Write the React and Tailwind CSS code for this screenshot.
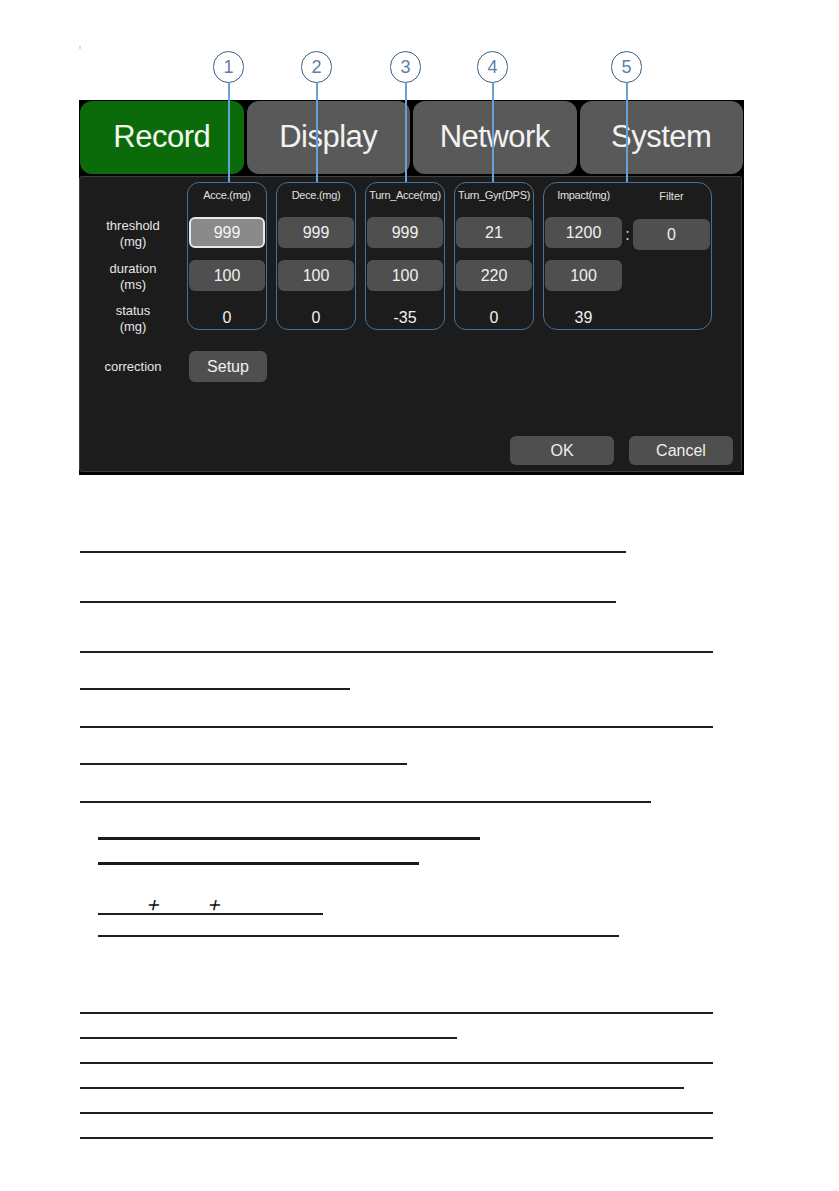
import React from "react";

const callouts = [
  { n: "1", x: "left-[213px]", lx: "left-[228px]" },
  { n: "2", x: "left-[301px]", lx: "left-[316px]" },
  { n: "3", x: "left-[390px]", lx: "left-[405px]" },
  { n: "4", x: "left-[477px]", lx: "left-[492px]" },
  { n: "5", x: "left-[611px]", lx: "left-[626px]" },
];

function Field({ value, selected }) {
  return (
    <div
      className={
        selected
          ? "h-[31px] rounded-[6px] bg-[#8a8a8a] border-2 border-[#e8e8e8] flex items-center justify-center text-[16px] text-[#f4f4f4]"
          : "h-[31px] rounded-[6px] bg-[#4f4f4f] flex items-center justify-center text-[16px] text-[#f0f0f0]"
      }
    >
      {value}
    </div>
  );
}

function Group({ title, t, d, s, selected }) {
  return (
    <div className="w-[80px] h-[148px] rounded-[12px] border-[1.5px] border-[#44709a] px-[1px] flex flex-col">
      <div className="h-[26px] flex items-center justify-center text-[11px] text-[#e0e0e0] whitespace-nowrap tracking-[-0.3px]">
        {title}
      </div>
      <div className="mt-[10px]">
        <Field value={t} selected={selected} />
      </div>
      <div className="mt-[12px]">
        <Field value={d} />
      </div>
      <div className="mt-[16px] h-[22px] flex items-center justify-center text-[16px] text-[#f0f0f0]">
        {s}
      </div>
    </div>
  );
}

function Label({ a, b }) {
  return (
    <div className="h-[31px] flex flex-col items-center justify-center text-[13px] leading-[15.5px] text-[#e6e6e6]">
      <span>{a}</span>
      <span>{b}</span>
    </div>
  );
}

export default function App() {
  return (
    <div
      className="relative w-[839px] h-[1191px] bg-white overflow-hidden"
      style={{ fontFamily: '"Liberation Sans", Arial, sans-serif' }}
    >
      {/* tiny mark */}
      <div className="absolute left-[79px] top-[46px] w-[2px] h-[3px] bg-[#d8d8d8]" />

      {/* callouts */}
      {callouts.map((c) => (
        <React.Fragment key={c.n}>
          <div
            className={`absolute ${c.x} top-[51px] w-[31px] h-[32px] rounded-full border-[1.5px] border-[#3a5d86] bg-white flex items-center justify-center text-[18px] text-[#5b7fa8] z-10`}
          >
            {c.n}
          </div>
          <div className={`absolute ${c.lx} top-[83px] w-[1.5px] h-[99px] bg-[#64a2d8] z-10`} />
        </React.Fragment>
      ))}

      {/* device screen */}
      <div className="ml-[79px] mt-[100px] w-[665px] h-[375px] bg-black pt-[1px] pl-[1px] pr-[1px] flex flex-col">
        <div className="flex gap-[3px] h-[73px]">
          <div className="flex-1 rounded-[12px] bg-[#0b6b0b] flex items-center justify-center text-[31px] text-[#f2f7f0] tracking-[-0.5px]">
            Record
          </div>
          <div className="flex-1 rounded-[12px] bg-[#595959] flex items-center justify-center text-[31px] text-[#f2f2f2] tracking-[-0.5px]">
            Display
          </div>
          <div className="flex-1 rounded-[12px] bg-[#595959] flex items-center justify-center text-[31px] text-[#f2f2f2] tracking-[-0.5px]">
            Network
          </div>
          <div className="flex-1 rounded-[12px] bg-[#595959] flex items-center justify-center text-[31px] text-[#f2f2f2] tracking-[-0.5px]">
            System
          </div>
        </div>

        <div className="mt-[2px] -ml-[1px] w-[663px] h-[296px] rounded-[3px] border border-[#3e3e3e] bg-[#1c1c1c] flex flex-col">
          <div className="flex pt-[5px]">
            {/* labels */}
            <div className="w-[106px] flex flex-col pt-[36px]">
              <Label a="threshold" b="(mg)" />
              <div className="mt-[12px]">
                <Label a="duration" b="(ms)" />
              </div>
              <div className="mt-[11px]">
                <Label a="status" b="(mg)" />
              </div>
            </div>
            <div className="ml-[1px] flex gap-[9px]">
              <Group title="Acce.(mg)" t="999" d="100" s="0" selected />
              <Group title="Dece.(mg)" t="999" d="100" s="0" />
              <Group title="Turn_Acce(mg)" t="999" d="100" s="-35" />
              <Group title="Turn_Gyr(DPS)" t="21" d="220" s="0" />
              <div className="w-[169px] h-[148px] rounded-[14px] border-[1.5px] border-[#44709a] px-[1px] flex">
                <div className="w-[77px] flex flex-col">
                  <div className="h-[26px] flex items-center justify-center text-[11px] text-[#e0e0e0] whitespace-nowrap tracking-[-0.3px]">
                    Impact(mg)
                  </div>
                  <div className="mt-[10px]">
                    <Field value="1200" />
                  </div>
                  <div className="mt-[12px]">
                    <Field value="100" />
                  </div>
                  <div className="mt-[16px] h-[22px] flex items-center justify-center text-[16px] text-[#f0f0f0]">
                    39
                  </div>
                </div>
                <div className="w-[11px] flex flex-col">
                  <div className="mt-[36px] h-[31px] flex items-center justify-center text-[16px] text-[#e0e0e0]">
                    :
                  </div>
                </div>
                <div className="w-[77px] flex flex-col">
                  <div className="h-[26px] flex items-center justify-center text-[11px] text-[#e0e0e0]">
                    Filter
                  </div>
                  <div className="mt-[10px]">
                    <Field value="0" />
                  </div>
                </div>
              </div>
            </div>
          </div>

          <div className="flex items-center mt-[17px]">
            <div className="w-[106px] text-center text-[13px] text-[#e6e6e6]">correction</div>
            <div className="ml-[3px] w-[78px] h-[31px] rounded-[6px] bg-[#4f4f4f] flex items-center justify-center text-[16px] text-[#f0f0f0]">
              Setup
            </div>
          </div>

          <div className="mt-auto mb-[6px] mr-[8px] flex justify-end gap-[15px]">
            <div className="w-[104px] h-[29px] rounded-[6px] bg-[#4f4f4f] flex items-center justify-center text-[16px] text-[#f0f0f0]">
              OK
            </div>
            <div className="w-[104px] h-[29px] rounded-[6px] bg-[#4f4f4f] flex items-center justify-center text-[16px] text-[#f0f0f0]">
              Cancel
            </div>
          </div>
        </div>
      </div>

      {/* blank rule lines */}
      <div className="ml-[80px] flex flex-col">
        <div className="mt-[76px] w-[546px] h-[2px] bg-[#1e1e1e]" />
        <div className="mt-[48px] w-[536px] h-[2px] bg-[#1e1e1e]" />
        <div className="mt-[48px] w-[633px] h-[2px] bg-[#1e1e1e]" />
        <div className="mt-[35px] w-[270px] h-[2px] bg-[#1e1e1e]" />
        <div className="mt-[36px] w-[633px] h-[2px] bg-[#1e1e1e]" />
        <div className="mt-[35px] w-[327px] h-[2px] bg-[#1e1e1e]" />
        <div className="mt-[36px] w-[571px] h-[2px] bg-[#1e1e1e]" />
        <div className="mt-[34px] ml-[18px] w-[382px] h-[3px] bg-[#1a1a1a]" />
        <div className="mt-[22px] ml-[18px] w-[321px] h-[3px] bg-[#1a1a1a]" />
        <div className="mt-[31px] ml-[18px] h-[17px] flex items-end">
          <span className="ml-[49px] inline-block w-[14px] text-center text-[21px] leading-[17px] text-[#111] -skew-x-12">
            +
          </span>
          <span className="ml-[47px] inline-block w-[14px] text-center text-[21px] leading-[17px] text-[#111] -skew-x-12">
            +
          </span>
        </div>
        <div className="ml-[18px] w-[225px] h-[2px] bg-[#1e1e1e]" />
        <div className="mt-[20px] ml-[18px] w-[521px] h-[2px] bg-[#1e1e1e]" />
        <div className="mt-[75px] w-[633px] h-[2px] bg-[#1e1e1e]" />
        <div className="mt-[23px] w-[377px] h-[2px] bg-[#1e1e1e]" />
        <div className="mt-[23px] w-[633px] h-[2px] bg-[#1e1e1e]" />
        <div className="mt-[23px] w-[604px] h-[2px] bg-[#1e1e1e]" />
        <div className="mt-[23px] w-[633px] h-[2px] bg-[#1e1e1e]" />
        <div className="mt-[23px] w-[633px] h-[2px] bg-[#1e1e1e]" />
      </div>
    </div>
  );
}
